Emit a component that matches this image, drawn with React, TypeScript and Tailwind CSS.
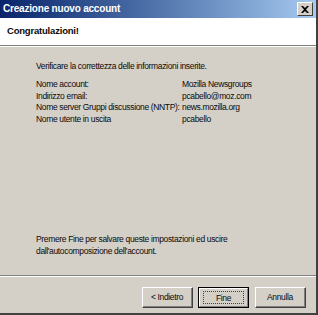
import React from "react";

const rows: [string, string][] = [
  ["Nome account:", "Mozilla Newsgroups"],
  ["Indirizzo email:", "pcabello@moz.com"],
  ["Nome server Gruppi discussione (NNTP):", "news.mozilla.org"],
  ["Nome utente in uscita", "pcabello"],
];

function Btn({ label, focused }: { label: string; focused?: boolean }) {
  return (
    <div
      className={`w-[51px] h-[21px] bg-[#d4d0c8] border ${
        focused ? "border-black" : "border-t-white border-l-white border-r-[#404040] border-b-[#404040]"
      } flex`}
    >
      <div
        className={`flex-1 flex items-center justify-center ${
          focused
            ? "border border-t-white border-l-white border-r-[#808080] border-b-[#808080]"
            : "border-r border-b border-r-[#808080] border-b-[#808080]"
        }`}
      >
        <div
          className={`flex items-center justify-center ${
            focused ? "border border-dotted border-[#404040] w-[41px] h-[13px]" : ""
          }`}
        >
          <span className="whitespace-nowrap">{label}</span>
        </div>
      </div>
    </div>
  );
}

export default function App() {
  return (
    <div
      className="w-[318px] h-[315px] bg-[#d4d0c8] flex flex-col text-[8.5px] leading-[12px] tracking-[-0.35px] text-[#0a0a0a] border-r-2 border-b-2 border-r-[#404040] border-b-[#404040] overflow-hidden"
      style={{ fontFamily: '"Liberation Sans", Arial, sans-serif' }}
    >
      <div className="h-[18px] flex items-center justify-between pl-[3px] pr-[3px] bg-gradient-to-r from-[#0a246a] to-[#a6caf0]">
        <span className="text-white font-bold text-[10px] tracking-[-0.2px]">Creazione nuovo account</span>
        <div className="w-[16px] h-[14px] bg-[#d4d0c8] border border-t-white border-l-white border-r-[#404040] border-b-[#404040] flex items-center justify-center">
          <svg width="8" height="7" viewBox="0 0 8 7">
            <path d="M0 0h2l2 2 2-2h2L5 3.5 8 7H6L4 5 2 7H0l3-3.5z" fill="#000" />
          </svg>
        </div>
      </div>
      <div className="h-[27px] bg-white flex items-start pl-[7px] pt-[7px]">
        <span className="font-bold text-[9.5px] tracking-[-0.2px]">Congratulazioni!</span>
      </div>
      <div className="h-[2px] border-t border-t-[#808080] border-b border-b-white" />
      <div className="flex-1 flex flex-col pl-[36px] pt-[13px]">
        <div className="whitespace-nowrap">Verificare la correttezza delle informazioni inserite.</div>
        <div className="mt-[7px] flex flex-col">
          {rows.map(([k, v]) => (
            <div key={k} className="flex h-[11.7px] leading-[11.7px] whitespace-nowrap">
              <span className="w-[146px]">{k}</span>
              <span>{v}</span>
            </div>
          ))}
        </div>
        <div className="mt-auto mb-[18px] whitespace-nowrap">
          Premere Fine per salvare queste impostazioni ed uscire
          <br />
          dall'autocomposizione dell'account.
        </div>
      </div>
      <div className="h-[2px] border-t border-t-[#808080] border-b border-b-white" />
      <div className="h-[36px] flex justify-end pr-[10px] pt-[10px]">
        <Btn label="< Indietro" />
        <div className="w-[5px]" />
        <Btn label="Fine" focused />
        <div className="w-[6px]" />
        <Btn label="Annulla" />
      </div>
    </div>
  );
}
